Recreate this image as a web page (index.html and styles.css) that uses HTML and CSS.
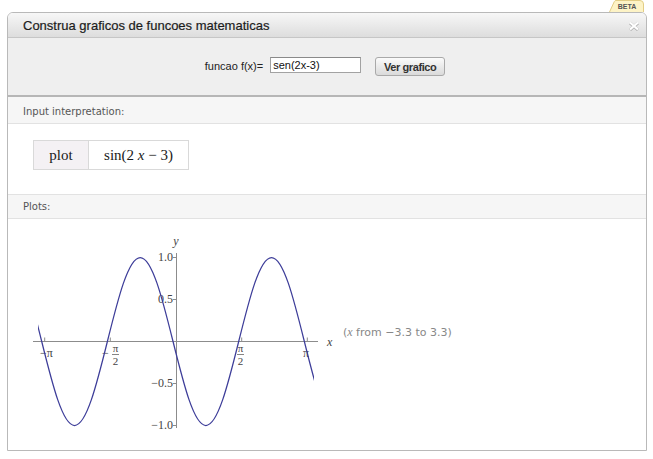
FILE: index.html
```html
<!DOCTYPE html>
<html lang="pt">
<head>
<meta charset="utf-8">
<title>Construa graficos de funcoes matematicas</title>
<link rel="stylesheet" href="styles.css">
</head>
<body>
<div class="page">
  <div class="tabrow">
    <svg class="beta" width="35" height="12" viewBox="0 0 35 12">
      <path d="M0.5 12 L5.3 1.6 Q5.8 0.5 7 0.5 H31 Q34.5 0.5 34.5 4 V12" fill="#fdf3c6" stroke="#e2cd85"/>
      <text x="18" y="9.3" text-anchor="middle" class="beta-text">BETA</text>
    </svg>
  </div>
  <div class="dialog">
    <div class="titlebar">
      <span class="title">Construa graficos de funcoes matematicas</span>
      <svg class="close" width="12" height="10" viewBox="0 0 12 10">
        <path d="M2 2 L10 9 M10 2 L2 9" stroke="#b3b3b3" stroke-width="3"/>
        <path d="M2 1.5 L10 8.5 M10 1.5 L2 8.5" stroke="#ffffff" stroke-width="2.2"/>
      </svg>
    </div>
    <div class="form">
      <label class="flabel" for="fx">funcao f(x)=</label>
      <input id="fx" class="finput" type="text" value="sen(2x-3)">
      <button class="fbutton" type="button">Ver grafico</button>
    </div>
    <div class="pod-head first">Input interpretation:</div>
    <div class="pod-body interp">
      <div class="itable">
        <div class="icell head">plot</div>
        <div class="icell">sin(2 <i>x</i> − 3)</div>
      </div>
    </div>
    <div class="pod-head second">Plots:</div>
    <div class="pod-body plot">
      <svg class="chart" width="330" height="231" viewBox="0 0 330 231">
        <defs>
          <clipPath id="clip"><rect x="30.06" y="0" width="275.88" height="231"/></clipPath>
        </defs>
        <g class="axes" stroke="#8c8c8c" stroke-width="1" fill="none">
          <path d="M25 122.5 H310"/>
          <path d="M168.5 34 V209"/>
          <path d="M165 38.5 H168 M165 80.5 H168 M165 164.5 H168 M165 206.5 H168"/>
          <path d="M36.7 118.5 V122 M102.3 118.5 V122 M233.7 118.5 V122 M299.3 118.5 V122"/>
        </g>
        <g class="ticklabels">
          <text x="165" y="42" text-anchor="end">1.0</text>
          <text x="165" y="84" text-anchor="end">0.5</text>
          <text x="165" y="168" text-anchor="end">−0.5</text>
          <text x="165" y="210" text-anchor="end">−1.0</text>
          <text x="38.5" y="137.5" text-anchor="middle">−π</text>
          <text x="97.5" y="137.5" text-anchor="middle">−</text>
          <text class="frac" x="107.5" y="133" text-anchor="middle">π</text>
          <text class="frac" x="107.5" y="146" text-anchor="middle">2</text>
          <text class="frac" x="232.5" y="133" text-anchor="middle">π</text>
          <text class="frac" x="232.5" y="146" text-anchor="middle">2</text>
          <text x="298" y="137.5" text-anchor="middle">π</text>
        </g>
        <g stroke="#666" stroke-width="0.8">
          <path d="M104 135.5 H111 M229 135.5 H236"/>
        </g>
        <text class="axislabel" x="168" y="26" text-anchor="middle">y</text>
        <text class="axislabel" x="319" y="126.5">x</text>
        <g clip-path="url(#clip)">
          <path transform="translate(-31.94,122.5) scale(20.9,-84)" vector-effect="non-scaling-stroke" fill="none" stroke="#3d3d99" stroke-width="1.25"
            d="M0 0 c.5123,.5123 1.0023,1 1.5708,1 c.5685,0 1.0585,-.4877 1.5708,-1 c.5123,-.5123 1.0023,-1 1.5708,-1 c.5685,0 1.0585,.4877 1.5708,1
               c.5123,.5123 1.0023,1 1.5708,1 c.5685,0 1.0585,-.4877 1.5708,-1 c.5123,-.5123 1.0023,-1 1.5708,-1 c.5685,0 1.0585,.4877 1.5708,1
               c.5123,.5123 1.0023,1 1.5708,1 c.5685,0 1.0585,-.4877 1.5708,-1 c.5123,-.5123 1.0023,-1 1.5708,-1 c.5685,0 1.0585,.4877 1.5708,1"/>
        </g>
      </svg>
      <span class="range">(<i>x</i> from −3.3 to 3.3)</span>
    </div>
  </div>
</div>
</body>
</html>
```

FILE: styles.css
```css
* { box-sizing: border-box; }

html, body {
  margin: 0;
  padding: 0;
  background: #ffffff;
}

.page {
  padding: 0 6px 0 7px;
  font-family: "Liberation Sans", Arial, sans-serif;
}

.tabrow {
  height: 12px;
  display: flex;
  justify-content: flex-end;
  padding-right: 3px;
}

.beta { display: block; }

.beta-text {
  font: bold 7px "Liberation Sans", Arial, sans-serif;
  fill: #555555;
}

.dialog {
  width: 640px;
  border: 1px solid #b9b9b9;
  border-radius: 6px 6px 0 0;
  background: #ffffff;
}

.titlebar {
  height: 25px;
  border-bottom: 1px solid #c6c6c6;
  border-radius: 5px 5px 0 0;
  background: linear-gradient(#f7f7f7, #dddddd);
  display: flex;
  align-items: center;
  justify-content: space-between;
  padding: 1px 6px 0 15px;
}

.title {
  font-size: 13px;
  color: #1c1c1c;
  -webkit-text-stroke: 0.2px #1c1c1c;
}

.close { display: block; }

.form {
  height: 59px;
  background: #efefef;
  border-bottom: 2px solid #b6b6b6;
  display: flex;
  justify-content: center;
  align-items: flex-start;
  padding: 19px 4px 0 0;
}

.flabel {
  font-size: 11px;
  line-height: 19px;
  color: #222222;
  margin-right: 7px;
}

.finput {
  width: 91px;
  height: 16px;
  margin: 0 14px 0 0;
  padding: 0 2px;
  border: 1px solid #a2a2a2;
  border-top-color: #8a8a8a;
  font: 11px "Liberation Sans", Arial, sans-serif;
  color: #111111;
  background: #ffffff;
}

.fbutton {
  width: 70px;
  height: 19px;
  margin: 0;
  padding: 0;
  border: 1px solid #a9a9a9;
  border-radius: 3px;
  background: linear-gradient(#fbfbfb, #dadada);
  font: bold 11px "Liberation Sans", Arial, sans-serif;
  letter-spacing: -0.4px;
  color: #333333;
}

.pod-head {
  font-family: "DejaVu Sans", Verdana, sans-serif;
  font-size: 10px;
  color: #555555;
  background: #f6f6f6;
  padding-left: 15px;
  border-bottom: 1px solid #e2e2e2;
}

.pod-head.first {
  height: 27px;
  line-height: 22px;
  padding-top: 4px;
}

.pod-head.second {
  height: 25px;
  line-height: 23px;
  border-top: 1px solid #e2e2e2;
}

.pod-body.interp {
  height: 70px;
  padding: 16px 0 0 25px;
}

.itable {
  display: inline-flex;
  border: 1px solid #d9d9d9;
  font-family: "Liberation Serif", "Times New Roman", serif;
  font-size: 15px;
  color: #1a1a1a;
}

.icell {
  width: 99px;
  height: 28px;
  line-height: 28px;
  text-align: center;
}

.icell.head {
  width: 55px;
  border-right: 1px solid #d9d9d9;
  background: #f4f1f4;
}

.pod-body.plot {
  height: 231px;
  display: flex;
  align-items: flex-start;
}

.chart { display: block; flex: none; }

.ticklabels text {
  font-family: "Liberation Serif", "Times New Roman", serif;
  font-size: 12px;
  fill: #444444;
}

.ticklabels text.frac {
  font-size: 11px;
}

.axislabel {
  font-family: "Liberation Serif", "Times New Roman", serif;
  font-style: italic;
  font-size: 12px;
  fill: #444444;
}

.range {
  margin: 107px 0 0 5px;
  font-family: "DejaVu Sans", Verdana, sans-serif;
  font-size: 11px;
  line-height: 13px;
  color: #888888;
  white-space: nowrap;
}

.range i {
  font-family: "Liberation Serif", "Times New Roman", serif;
  font-size: 12px;
}
```
